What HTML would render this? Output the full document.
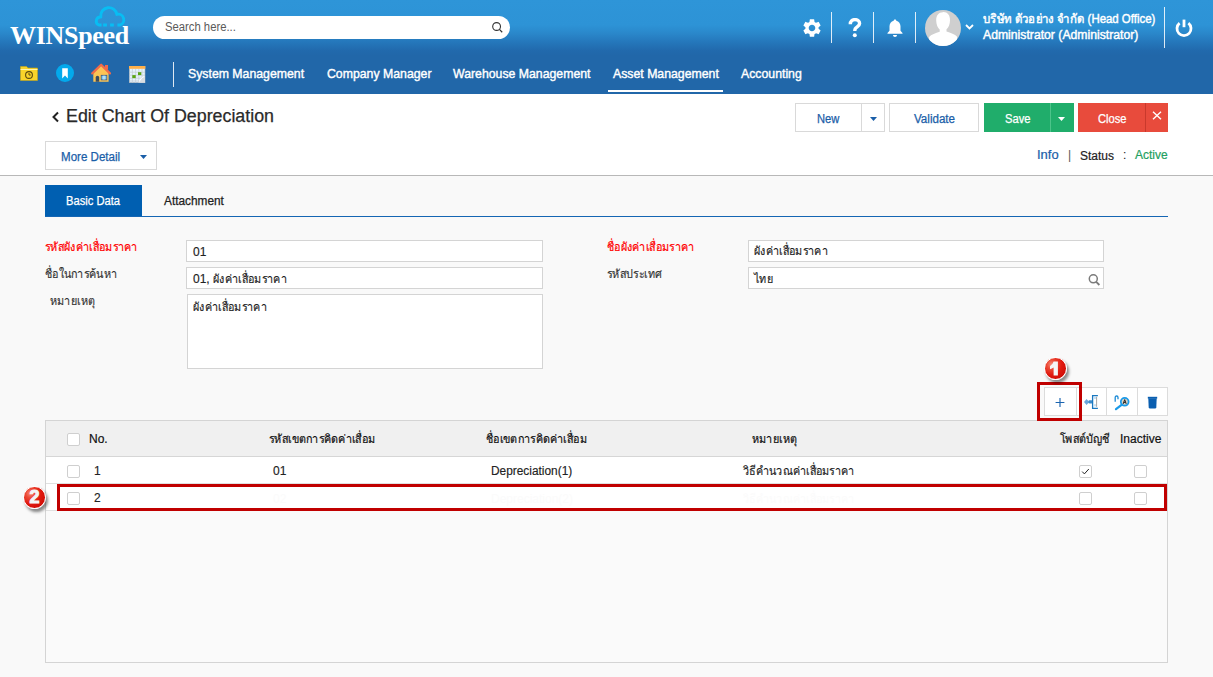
<!DOCTYPE html>
<html><head><meta charset="utf-8">
<style>
*{margin:0;padding:0;box-sizing:border-box}
html,body{width:1213px;height:677px;overflow:hidden;background:#f9f9f9;font-family:"Liberation Sans",sans-serif;color:#333}
.a{position:absolute}
#hdr{left:0;top:0;width:1213px;height:94px;background:linear-gradient(to bottom,#2e95d8 0px,#2d93d6 25px,#2a88cb 33px,#2577bb 42px,#2169ac 51px,#2167a9 56px,#2167a9 94px)}
.logo{left:10px;top:21px;font-family:"Liberation Serif",serif;font-weight:bold;font-size:26px;color:#fff;letter-spacing:-0.3px}
.search{left:153px;top:16px;width:357px;height:23px;background:#fff;border-radius:12px}
.search span{position:absolute;left:12px;top:4px;font-size:12px;color:#5a5a5a;transform:scaleX(0.94);transform-origin:0 0;white-space:nowrap}
.wt{color:#fff}
.nav{top:66px;font-size:13px;color:#fff;-webkit-text-stroke:0.4px #fff;transform:scaleX(0.945);transform-origin:0 0;white-space:nowrap}
.vsep{width:1px;background:rgba(255,255,255,.85)}
#top{left:0;top:94px;width:1213px;height:82px;background:#fff;border-bottom:1px solid #b8b8b8}
.btn{border:1px solid #d9d9d9;background:#fff;font-size:12px;color:#1a5ea8;text-align:center}
.lbl{font-size:12px;color:#333;-webkit-text-stroke:0.15px #333}
.red{color:#f00;-webkit-text-stroke:0.2px #f00}
.inp{background:#fff;border:1px solid #d4d4d4;font-size:12px;color:#222;padding-left:5px;-webkit-text-stroke:0.15px #222}
.tb{border:1px solid #dcdcdc;background:#fff}
.cb{width:13px;height:13px;border:1px solid #cfcfcf;border-radius:2px;background:#fff}
.th{font-size:12px;color:#111;-webkit-text-stroke:0.2px #111}
.td{font-size:12px;color:#222;-webkit-text-stroke:0.15px #222}
.badge{border-radius:50%;background:radial-gradient(circle at 30% 30%,#f58a78 0%,#ec4a36 22%,#e01a10 50%,#cf0c06 80%,#b00804 100%);border:1.5px solid #fff;box-shadow:2px 3px 3px rgba(0,0,0,.45);color:#f4f6f6;font-weight:bold;font-size:18px;text-align:center;-webkit-text-stroke:1px #f4f6f6}
.hl{border:3px solid #c00000}
.t{transform:scaleX(0.93);transform-origin:0 0;white-space:nowrap;-webkit-text-stroke:0.25px currentColor}
.th9{transform:scaleX(0.9);transform-origin:0 0;white-space:nowrap}
.th9i{display:inline-block;transform:scaleX(0.9);transform-origin:0 0;white-space:nowrap}
</style></head>
<body>
<div id="hdr" class="a">
  <div class="a logo">WINSpeed</div>
  <svg class="a" style="left:92.9px;top:3px" width="34.24" height="25.68" viewBox="0 0 32 24">
    <path d="M8 20.6 H5.5 A3.9 3.9 0 0 1 7.3 13.1 A7.5 7.5 0 0 1 22.3 10.7 A5 5 0 0 1 25 20.6 H22.8" fill="none" stroke="#08bdf3" stroke-width="2.7" stroke-linejoin="round"/>
    <path d="M9.5 20.6 H13 M16 20.6 H19.5" stroke="#08bdf3" stroke-width="2.7"/>
  </svg>
  <div class="a search"><span>Search here...</span>
    <svg class="a" style="left:338px;top:5px" width="13" height="13" viewBox="0 0 13 13"><circle cx="5.6" cy="5.5" r="3.9" fill="none" stroke="#333" stroke-width="1.1"/><path d="M8.4 8.4 L11.2 11.2" stroke="#333" stroke-width="1.3"/></svg>
  </div>

  <!-- right icons -->
  <svg class="a" style="left:801px;top:17.3px" width="22" height="22" viewBox="0 0 24 24"><path fill="#fff" d="M19.14 12.94c.04-.3.06-.61.06-.94 0-.32-.02-.64-.07-.94l2.03-1.58a.49.49 0 0 0 .12-.61l-1.92-3.32a.488.488 0 0 0-.59-.22l-2.39.96c-.5-.38-1.03-.7-1.62-.94l-.36-2.54a.484.484 0 0 0-.48-.41h-3.84c-.24 0-.43.17-.47.41l-.36 2.54c-.59.24-1.13.57-1.62.94l-2.39-.96c-.22-.08-.47 0-.59.22L2.74 8.87c-.12.21-.08.47.12.61l2.03 1.58c-.05.3-.09.63-.09.94s.02.64.07.94l-2.03 1.58a.49.49 0 0 0-.12.61l1.92 3.32c.12.22.37.29.59.22l2.39-.96c.5.38 1.03.7 1.62.94l.36 2.54c.05.24.24.41.48.41h3.84c.24 0 .44-.17.47-.41l.36-2.54c.59-.24 1.13-.56 1.62-.94l2.39.96c.22.08.47 0 .59-.22l1.92-3.32c.12-.22.07-.47-.12-.61l-2.01-1.58zM12 15.6c-1.98 0-3.6-1.62-3.6-3.6s1.62-3.6 3.6-3.6 3.6 1.62 3.6 3.6-1.62 3.6-3.6 3.6z"/></svg>
  <div class="a vsep" style="left:831px;top:12px;height:31px"></div>
  <svg class="a" style="left:848px;top:18px" width="14" height="20" viewBox="0 0 14 20"><path d="M2.3 6.2C2.3 3.2 4.3 1.6 7 1.6 9.7 1.6 11.6 3.2 11.6 5.6 11.6 8.3 8.4 8.8 7.3 10.6 6.9 11.3 6.8 12 6.8 13" fill="none" stroke="#fff" stroke-width="3.4"/><circle cx="6.8" cy="17.2" r="2" fill="#fff"/></svg>
  <div class="a vsep" style="left:873px;top:12px;height:31px"></div>
  <svg class="a" style="left:885.5px;top:18px" width="18" height="20" viewBox="0 0 18 20"><path fill="#fff" d="M9 1.5c.8 0 1.3.5 1.3 1.2 2.6.6 4.2 2.8 4.2 5.6v4.4l2 2.2v.9H1.5v-.9l2-2.2V8.3c0-2.8 1.6-5 4.2-5.6C7.7 2 8.2 1.5 9 1.5zM7 17h4c0 1.1-.9 2-2 2s-2-.9-2-2z"/></svg>
  <div class="a vsep" style="left:915px;top:12px;height:31px"></div>
  <div class="a" style="left:925px;top:10px;width:36px;height:36px;border-radius:50%;background:#cfcfcf;overflow:hidden">
    <svg width="36" height="36" viewBox="0 0 36 36"><path fill="#fff" d="M17.8 2.3c-4 0-6.6 3-6.6 8.2 0 4 1.5 7.4 3.5 9v2.3c-4 1.2-8.6 2.8-10.6 5.3V36h28v-9.2c-2-2.5-6.6-4.1-10.6-5.3v-2.3c2-1.6 3.5-5 3.5-9 0-5.2-2.6-8.2-6.6-8.2z"/></svg>
  </div>
  <svg class="a" style="left:965px;top:24px" width="9" height="6" viewBox="0 0 9 6"><path d="M1 1l3.5 3.5L8 1" fill="none" stroke="#fff" stroke-width="1.8"/></svg>
  <div class="a wt" style="left:983px;top:11px;font-size:12.5px;line-height:16px;white-space:nowrap;-webkit-text-stroke:0.45px #fff;transform:scaleX(0.914);transform-origin:0 0">บริษัท ตัวอย่าง จำกัด (Head Office)</div>
  <div class="a wt" style="left:983px;top:27px;font-size:12.5px;line-height:16px;white-space:nowrap;-webkit-text-stroke:0.45px #fff;transform:scaleX(0.977);transform-origin:0 0">Administrator (Administrator)</div>
  <div class="a vsep" style="left:1164px;top:7px;height:41px"></div>
  <svg class="a" style="left:1174px;top:18px" width="20" height="20" viewBox="0 0 20 20"><path d="M5.6 5.2A7 7 0 1 0 14.4 5.2" fill="none" stroke="#fff" stroke-width="2.8"/><path d="M10 1.6v7.6" stroke="#fff" stroke-width="2.8"/></svg>
  <!-- nav row -->
  <svg class="a" style="left:20px;top:65px" width="18" height="16" viewBox="0 0 18 16"><path d="M0.5 1.5h6l1.5 1.5h9.5v12.5H0.5z" fill="#f8d42a" stroke="#c8a818" stroke-width="0.6"/><rect x="0.5" y="4" width="17" height="1" fill="#fff5b0"/><circle cx="9" cy="10" r="3.4" fill="none" stroke="#5a4a10" stroke-width="1.1"/><path d="M9 8v2h1.7" fill="none" stroke="#5a4a10" stroke-width="1"/></svg>
  <div class="a" style="left:56px;top:64px;width:18px;height:18px;border-radius:50%;background:#03a9ec"></div>
  <svg class="a" style="left:62px;top:68px" width="6" height="11" viewBox="0 0 6 11"><path d="M0.2 0.3H5.8V10.6L3 7.6L0.2 10.6Z" fill="#fff"/></svg>
  <svg class="a" style="left:91px;top:63px" width="20" height="20" viewBox="0 0 20 20"><path d="M2.3 9.8L10.1 2.6L17.6 9.8V18.8H2.3Z" fill="#fcc454"/><rect x="14" y="2" width="3" height="4.6" fill="#f06a4a"/><path d="M1.3 10.4L10.1 1.8L18.9 10.4" fill="none" stroke="#f06a4a" stroke-width="2.3" stroke-linecap="round" stroke-linejoin="round"/><path d="M4.7 18.8V14.5Q4.7 12.7 6.45 12.7Q8.2 12.7 8.2 14.5V18.8Z" fill="#3d4d5d"/><rect x="10.2" y="12.3" width="5.6" height="4.6" fill="#86cdf4" stroke="#3a5a82" stroke-width="0.8"/><path d="M13 12.5V16.7" stroke="#fff" stroke-width="0.7"/></svg>
  <svg class="a" style="left:129px;top:66px" width="17" height="17" viewBox="0 0 17 17"><rect x="0.3" y="0.3" width="15.7" height="16.4" fill="#e4f3fc" stroke="#aab4bc" stroke-width="0.6"/><rect x="0" y="0" width="16.3" height="2.8" fill="#ffb04a"/><path d="M0.5 6.2H16M0.5 9.2H16M0.5 12.2H16M0.5 15H16M3.4 3V16.7M6.6 3V16.7M9.8 3V16.7M13 3V16.7" stroke="#c4ccd4" stroke-width="0.7"/><rect x="3.3" y="9.1" width="3.4" height="3" fill="#5aa514"/><rect x="9" y="6.2" width="3.3" height="2.9" fill="#5aa514"/><path d="M9.6 16.7L16 10V16.7Z" fill="#d8dde2"/><path d="M9.6 16.7Q10.5 11.5 16 10Q12 12.5 9.6 16.7Z" fill="#fff"/></svg>
  <div class="a vsep" style="left:173px;top:62px;height:25px"></div>
  <div class="a nav" style="left:188px">System Management</div>
  <div class="a nav" style="left:327px">Company Manager</div>
  <div class="a nav" style="left:453px">Warehouse Management</div>
  <div class="a nav" style="left:613px">Asset Management</div>
  <div class="a" style="left:608px;top:90px;width:115px;height:2px;background:#fff"></div>
  <div class="a nav" style="left:741px">Accounting</div>
</div>
<div id="top" class="a">
  <svg class="a" style="left:51px;top:17px" width="9" height="12" viewBox="0 0 9 12"><path d="M7 1.5L2.5 6L7 10.5" fill="none" stroke="#222" stroke-width="2"/></svg>
  <div class="a t" style="left:66px;top:12px;font-size:18px;color:#2a2a2a;transform:scaleX(0.99)">Edit Chart Of Depreciation</div>
  <div class="a btn" style="left:45px;top:47px;width:112px;height:29px"></div>
  <div class="a t" style="left:61px;top:56px;font-size:12px;color:#1a5ea8;transform:scaleX(0.963)">More Detail</div>
  <svg class="a" style="left:140px;top:61px" width="7" height="4" viewBox="0 0 7 4"><path d="M0 0h7L3.5 4z" fill="#1a5ea8"/></svg>

  <div class="a btn" style="left:795px;top:9px;width:90px;height:29px"></div>
  <div class="a" style="left:861px;top:10px;width:1px;height:27px;background:#d9d9d9"></div>
  <div class="a t" style="left:817px;top:18px;font-size:12px;color:#1a5ea8">New</div>
  <svg class="a" style="left:869.5px;top:23px" width="7" height="4" viewBox="0 0 7 4"><path d="M0 0h7L3.5 4z" fill="#1a5ea8"/></svg>
  <div class="a btn" style="left:889px;top:9px;width:90px;height:29px"></div>
  <div class="a t" style="left:914px;top:18px;font-size:12px;color:#1a5ea8;transform:scaleX(0.966)">Validate</div>
  <div class="a" style="left:984px;top:9px;width:90px;height:29px;background:#20ad6b"></div>
  <div class="a" style="left:1050px;top:9px;width:1px;height:29px;background:#4cc48a"></div>
  <div class="a wt t" style="left:1005px;top:18px;font-size:12px">Save</div>
  <svg class="a" style="left:1058px;top:23px" width="7" height="4" viewBox="0 0 7 4"><path d="M0 0h7L3.5 4z" fill="#fff"/></svg>
  <div class="a" style="left:1078px;top:9px;width:90px;height:29px;background:#e84b3c"></div>
  <div class="a" style="left:1145px;top:9px;width:1px;height:29px;background:#c9392c"></div>
  <div class="a wt t" style="left:1098px;top:18px;font-size:12px">Close</div>
  <svg class="a" style="left:1152px;top:17px" width="10" height="9" viewBox="0 0 10 9"><path d="M1 0.8L9 8.2M9 0.8L1 8.2" stroke="#fff" stroke-width="1.4"/></svg>

  <div class="a" style="left:1037px;top:54px;font-size:12px;-webkit-text-stroke:0.2px currentColor;color:#1a5ea8;transform:scaleX(1.08);transform-origin:0 0">Info</div>
  <div class="a" style="left:1068px;top:54px;font-size:12px;color:#555">|</div>
  <div class="a" style="left:1080px;top:55px;font-size:12px;-webkit-text-stroke:0.2px currentColor;color:#222">Status</div>
  <div class="a" style="left:1123px;top:54px;font-size:12px;color:#222">:</div>
  <div class="a" style="left:1135px;top:54px;font-size:12px;-webkit-text-stroke:0.2px currentColor;color:#22a060">Active</div>
</div>

<!-- tabs -->
<div class="a" style="left:45px;top:185px;width:97px;height:32px;background:#005fb1"></div>
<div class="a wt t" style="left:66px;top:194px;font-size:12px">Basic Data</div>
<div class="a t" style="left:164px;top:194px;font-size:12px;color:#222;transform:scaleX(0.986)">Attachment</div>
<div class="a" style="left:45px;top:216px;width:1123px;height:1px;background:#1566b4"></div>

<!-- form -->
<div class="a lbl red th9" style="left:45px;top:237px">รหัสผังค่าเสื่อมราคา</div>
<div class="a inp" style="left:186px;top:240px;width:357px;height:22px;line-height:21px;padding-top:1px;padding-left:6px">01</div>
<div class="a lbl th9" style="left:45px;top:264px">ชื่อในการค้นหา</div>
<div class="a inp" style="left:186px;top:267px;width:357px;height:22px;line-height:21px;padding-top:1px;padding-left:6px">01, <span class="th9i">ผังค่าเสื่อมราคา</span></div>
<div class="a lbl th9" style="left:50px;top:291px">หมายเหตุ</div>
<div class="a inp" style="left:187px;top:294px;width:356px;height:75px;line-height:24px;padding-left:5px"><span class="th9i">ผังค่าเสื่อมราคา</span></div>

<div class="a lbl red th9" style="left:607px;top:237px">ชื่อผังค่าเสื่อมราคา</div>
<div class="a inp" style="left:748px;top:240px;width:356px;height:22px;line-height:21px;padding-left:5px"><span class="th9i">ผังค่าเสื่อมราคา</span></div>
<div class="a lbl th9" style="left:607px;top:264px">รหัสประเทศ</div>
<div class="a inp" style="left:748px;top:267px;width:356px;height:22px;line-height:21px;padding-left:5px;padding-top:1px"><span class="th9i">ไทย</span></div>
<svg class="a" style="left:1086px;top:271px" width="16" height="16" viewBox="0 0 16 16"><circle cx="7.3" cy="7.8" r="4" fill="none" stroke="#7a7a7a" stroke-width="1.5"/><path d="M10.2 10.8L13.4 14" stroke="#7a7a7a" stroke-width="1.8"/></svg>

<!-- toolbar -->
<div class="a tb" style="left:1044px;top:387px;width:124px;height:29px"></div>
<div class="a" style="left:1076px;top:388px;width:1px;height:27px;background:#dcdcdc"></div>
<div class="a" style="left:1106px;top:388px;width:1px;height:27px;background:#dcdcdc"></div>
<div class="a" style="left:1137px;top:388px;width:1px;height:27px;background:#dcdcdc"></div>
<svg class="a" style="left:1054px;top:397px" width="12" height="11" viewBox="0 0 12 11"><path d="M6 1v9M1.6 5.5h8.8" stroke="#1a64b0" stroke-width="1.15"/></svg>
<svg class="a" style="left:1083px;top:394px" width="17" height="16" viewBox="0 0 17 16"><path d="M1 8L3.6 4.9L6.2 8L3.6 11.1Z" fill="#6aa6dc"/><rect x="5.4" y="6.2" width="4.4" height="3.4" rx="1.4" fill="#3b8ccc"/><path d="M14.9 1.6H9.6V14.4H14.9" fill="none" stroke="#1a78c0" stroke-width="1.3"/><rect x="10.8" y="2.8" width="2.2" height="2.2" fill="#c4e2f8"/><rect x="10.8" y="10.2" width="2.2" height="2.2" fill="#c4e2f8"/><path d="M13.6 2.8V12.8" stroke="#9a9a9a" stroke-width="0.9"/></svg>
<svg class="a" style="left:1114px;top:395px" width="17" height="16" viewBox="0 0 17 16"><circle cx="10.7" cy="6.8" r="3.9" fill="#d9d4c8" stroke="#1a9ae8" stroke-width="1.8"/><path d="M7.9 9.6L2 14.2" stroke="#1a9ae8" stroke-width="2.2" stroke-linecap="round"/><path d="M1.2 6.8V2.4Q1.2 1 2.6 1Q4 1 4 2.4V4.3" fill="none" stroke="#1a8ad6" stroke-width="1.3"/><path d="M9.2 8.9L10.7 4.6L12.2 8.9M9.8 7.4H11.6" fill="none" stroke="#222" stroke-width="1"/></svg>
<svg class="a" style="left:1147px;top:396px" width="11" height="13" viewBox="0 0 11 13"><path d="M0.8 0.8H10.2V2.6H0.8Z" fill="#0a5fb0"/><path d="M1.3 2.2H9.7L9.3 11.2Q9.2 12.4 8 12.4H3Q1.8 12.4 1.7 11.2Z" fill="#0a5fb0"/></svg>

<!-- table -->
<div class="a" style="left:45px;top:420px;width:1123px;height:243px;border:1px solid #d4d4d4;background:#fafafa"></div>
<div class="a" style="left:46px;top:421px;width:1121px;height:36px;background:#f0f0f0;border-bottom:1px solid #d6d6d6"></div>
<div class="a" style="left:46px;top:457px;width:1121px;height:27px;background:#fff;border-bottom:1px solid #e0e0e0"></div>
<div class="a" style="left:46px;top:484px;width:1121px;height:27px;background:#fff;border-bottom:1px solid #e0e0e0"></div>

<div class="a cb" style="left:67px;top:433px"></div>
<div class="a th" style="left:89px;top:432px">No.</div>
<div class="a th th9" style="left:269px;top:429px">รหัสเขตการคิดค่าเสื่อม</div>
<div class="a th th9" style="left:486px;top:429px">ชื่อเขตการคิดค่าเสื่อม</div>
<div class="a th th9" style="left:752px;top:429px">หมายเหตุ</div>
<div class="a th th9" style="left:1060px;top:429px">โพสต์บัญชี</div>
<div class="a th" style="left:1120px;top:432px">Inactive</div>

<div class="a cb" style="left:67px;top:465px"></div>
<div class="a td" style="left:94px;top:464px">1</div>
<div class="a td" style="left:273px;top:464px">01</div>
<div class="a td" style="left:491px;top:464px;transform:scaleX(0.99);transform-origin:0 0">Depreciation(1)</div>
<div class="a td th9" style="left:743px;top:461px">วิธีคำนวณค่าเสื่อมราคา</div>
<div class="a cb" style="left:1079px;top:465px"></div>
<svg class="a" style="left:1081px;top:467px" width="9" height="9" viewBox="0 0 9 9"><path d="M1.2 4.6l2.2 2.3L7.8 2" fill="none" stroke="#222" stroke-width="1"/></svg>
<div class="a cb" style="left:1134px;top:465px"></div>

<div class="a cb" style="left:67px;top:492px"></div>
<div class="a td" style="left:94px;top:491px">2</div>
<div class="a td" style="left:273px;top:492px;color:#fbfbfb;-webkit-text-stroke:0">02</div>
<div class="a td" style="left:491px;top:492px;color:#fbfbfb;-webkit-text-stroke:0">Depreciation(2)</div>
<div class="a td th9" style="left:743px;top:489px;color:#fbfbfb;-webkit-text-stroke:0">วิธีคำนวณค่าเสื่อมราคา</div>
<div class="a cb" style="left:1079px;top:492px"></div>
<div class="a cb" style="left:1134px;top:492px"></div>

<!-- highlights -->
<div class="a hl" style="left:1037px;top:382px;width:45px;height:39px"></div>
<div class="a hl" style="left:57px;top:484px;width:1110px;height:27px"></div>
<div class="a badge" style="left:1044px;top:356.5px;width:23px;height:23px;line-height:21px"><svg style="position:absolute;left:0;top:0" width="20" height="20" viewBox="0 0 20 20"><path d="M8.6 3.6H12.9V17.4H8.6V9.4Q7 10.6 5 11.2V8Q7.6 6.9 8.6 3.6Z" fill="#f4f6f6"/></svg></div>
<div class="a badge" style="left:23px;top:486px;width:23px;height:23px;line-height:21px">2</div>

</body></html>
